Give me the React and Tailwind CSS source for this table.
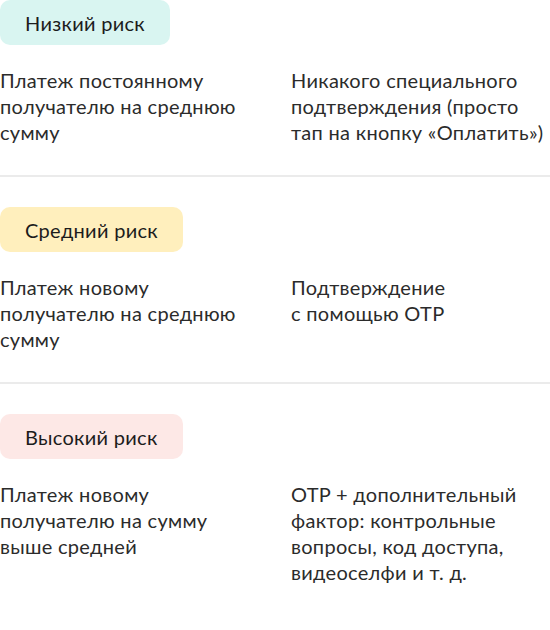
import React from "react";

const rows = [
  {
    label: "Низкий риск",
    pill: "bg-[#d9f5f1]",
    left: ["Платеж постоянному", "получателю на среднюю", "сумму"],
    right: ["Никакого специального", "подтверждения (просто", "тап на кнопку «Оплатить»)"],
  },
  {
    label: "Средний риск",
    pill: "bg-[#ffefbd]",
    left: ["Платеж новому", "получателю на среднюю", "сумму"],
    right: ["Подтверждение", "с помощью OTP"],
  },
  {
    label: "Высокий риск",
    pill: "bg-[#fde8e6]",
    left: ["Платеж новому", "получателю на сумму", "выше средней"],
    right: ["OTP + дополнительный", "фактор: контрольные", "вопросы, код доступа,", "видеоселфи и т. д."],
  },
];

export default function App() {
  return (
    <div className="w-[550px] h-[630px] bg-white font-['Lato',sans-serif] text-[#2b2b2b] tracking-[0.3px]">
      {rows.map((r, i) => (
        <div key={i}>
          {i > 0 && <div className="h-[2px] bg-[#ebebeb] mb-[30px]" />}
          <div className={i < rows.length - 1 ? "pb-[30px]" : ""}>
            <div className={`inline-flex items-center h-[45px] px-[25px] rounded-[10px] text-[20px] text-[#1c1c1c] ${r.pill}`}>
              {r.label}
            </div>
            <div className="mt-[22px] grid grid-cols-[291px_1fr] text-[20px] leading-[26px]">
              <div>
                {r.left.map((l, j) => (
                  <div key={j} className="whitespace-nowrap">{l}</div>
                ))}
              </div>
              <div>
                {r.right.map((l, j) => (
                  <div key={j} className="whitespace-nowrap">{l}</div>
                ))}
              </div>
            </div>
          </div>
        </div>
      ))}
    </div>
  );
}
